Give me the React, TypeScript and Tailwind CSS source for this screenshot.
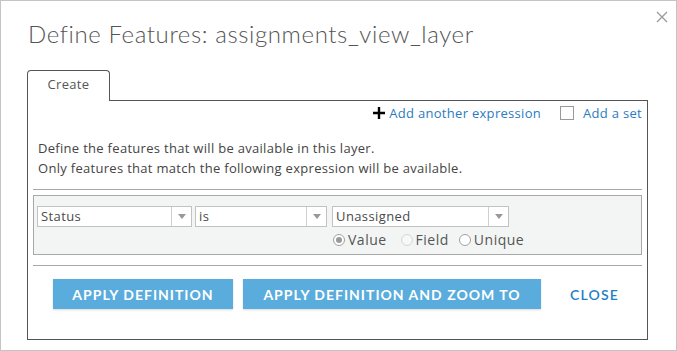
import React from "react";

const Select = ({ label, width }: { label: string; width: string }) => {
  return (
    <div
      className={`flex h-[21px] items-stretch border border-[#c2c2c2] bg-white ${width}`}
    >
      <div className="flex flex-1 items-center pl-[3px] text-[13px] tracking-[0.4px] text-[#4a4a4a]">
        {label}
      </div>
      <div className="flex w-[20px] items-center justify-center border-l border-[#d0d0d0]">
        <svg width="8" height="5" viewBox="0 0 8 5">
          <path d="M0 0h8L4 5z" fill="#999" />
        </svg>
      </div>
    </div>
  );
};

const Radio = ({
  label,
  checked,
  disabled,
  className,
}: {
  label: string;
  checked?: boolean;
  disabled?: boolean;
  className?: string;
}) => {
  return (
    <label className={`flex items-center gap-[3px] ${className ?? ""}`}>
      <span
        className={`flex h-[12px] w-[12px] items-center justify-center rounded-full border ${
          disabled ? "border-[#d6d6d6] bg-[#f7f7f7]" : "border-[#a0a0a0] bg-white"
        }`}
      >
        {checked && <span className="h-[6px] w-[6px] rounded-full bg-[#9a9a9a]" />}
      </span>
      <span className="text-[14px] tracking-[0.5px] text-[#555]">{label}</span>
    </label>
  );
};

export default function App() {
  return (
    <div
      className="relative box-border h-[351px] w-[677px] border border-[#c4c4c4] bg-white tracking-[0.3px]"
      style={{ fontFamily: "'Open Sans', Lato, sans-serif" }}
    >
      {/* close icon */}
      <button className="absolute right-[8px] top-[10px]">
        <svg width="12" height="12" viewBox="0 0 12 12">
          <path d="M1 1l10 10M11 1L1 11" stroke="#9a9a9a" strokeWidth="1.3" />
        </svg>
      </button>

      <div
        className="pl-[27px] pt-[17px] text-[24px] font-light leading-[32px] tracking-[0.6px] text-[#555]"
        style={{ fontFamily: "Lato, sans-serif" }}
      >
        Define Features: assignments_view_layer
      </div>

      <div className="mx-[26px] mt-[20px]">
        {/* Tab */}
        <div className="relative z-10 -mb-px flex h-[31px] w-[83px] items-center justify-center rounded-t-[4px] border border-b-0 border-[#555] bg-white pb-[2px] text-[13px] text-[#555]">
          Create
        </div>

        {/* Panel */}
        <div className="box-border h-[240px] w-[621px] border border-[#555]">
          <div className="flex items-center justify-end pr-[5px] pt-[4px] text-[13px] leading-[16px] text-[#2b7bbf]">
            <svg width="12" height="12" viewBox="0 0 12 12" className="mr-[4px]">
              <path d="M6 0v12M0 6h12" stroke="#000" strokeWidth="2.4" />
            </svg>
            <span>Add another expression</span>
            <span className="ml-[19px] mr-[9px] h-[14px] w-[14px] border border-[#9a9a9a] bg-white" />
            <span>Add a set</span>
          </div>

          <div className="pl-[10px] pt-[17px] text-[13px] leading-[20px] text-[#444]">
            <div>Define the features that will be available in this layer.</div>
            <div>Only features that match the following expression will be available.</div>
          </div>

          <div className="mx-[5px] mt-[11px] border-t border-[#a8a8a8]" />

          {/* Expression */}
          <div className="mx-[5px] mt-[5px] box-border h-[60px] border border-[#a8a8a8] bg-[#f3f5f4] pl-[3px] pt-[10px]">
            <div className="flex items-start">
              <Select label="Status" width="w-[155px]" />
              <div className="ml-[3px]">
                <Select label="is" width="w-[132px]" />
              </div>
              <div className="ml-[5px] flex flex-col">
                <Select label="Unassigned" width="w-[177px]" />
                <div className="ml-[1px] mt-[2px] flex items-center leading-[22px]">
                  <Radio label="Value" checked />
                  <Radio label="Field" disabled className="ml-[14px]" />
                  <Radio label="Unique" className="ml-[10px]" />
                </div>
              </div>
            </div>
          </div>

          <div className="mx-[5px] mt-[10px] border-t border-[#a8a8a8]" />

          {/* Buttons */}
          <div
            className="flex items-center pl-[25px] pt-[13px]"
            style={{ fontFamily: "Lato, sans-serif" }}
          >
            <button className="h-[30px] w-[180px] bg-[#5aacdd] text-[14px] font-bold tracking-[1px] text-white shadow-[0_1px_2px_rgba(0,0,0,0.15)]">
              APPLY DEFINITION
            </button>
            <button className="ml-[10px] h-[30px] w-[298px] bg-[#5aacdd] text-[14px] font-bold tracking-[1px] text-white shadow-[0_1px_2px_rgba(0,0,0,0.15)]">
              APPLY DEFINITION AND ZOOM TO
            </button>
            <button className="ml-[29px] text-[14px] font-semibold tracking-[1.2px] text-[#1e80c6]">
              CLOSE
            </button>
          </div>
        </div>
      </div>
    </div>
  );
}
